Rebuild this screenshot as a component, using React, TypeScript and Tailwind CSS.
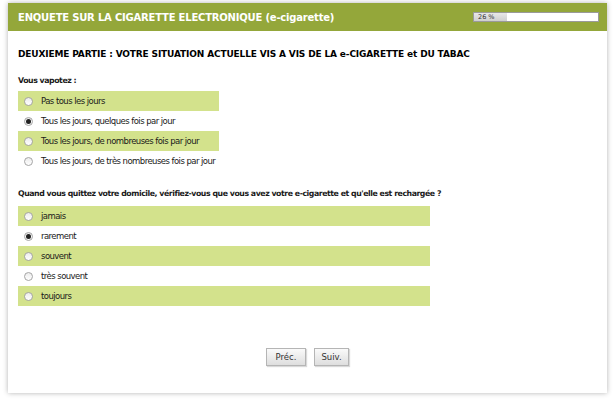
import React from "react";

const font = { fontFamily: '"DejaVu Sans", Verdana, sans-serif' };

function Radio({ checked }: { checked?: boolean }) {
  return (
    <span className="flex h-[9px] w-[9px] shrink-0 items-center justify-center rounded-full border border-[#a5a5a5] bg-gradient-to-b from-[#ececec] to-white">
      {checked && <span className="h-[5px] w-[5px] rounded-full bg-[#222]" />}
    </span>
  );
}

function Row({ label, green, checked, width }: { label: string; green: boolean; checked?: boolean; width: string }) {
  return (
    <div className={`flex h-[20px] items-center pl-[6px] ${width} ${green ? "bg-[#d3e28c]" : "bg-white"}`}>
      <Radio checked={checked} />
      <span className="ml-[8px] whitespace-nowrap text-[8.5px] tracking-[-0.55px] text-[#1a1a1a]">{label}</span>
    </div>
  );
}

export default function App() {
  const q1 = [
    "Pas tous les jours",
    "Tous les jours, quelques fois par jour",
    "Tous les jours, de nombreuses fois par jour",
    "Tous les jours, de très nombreuses fois par jour",
  ];
  const q2 = ["jamais", "rarement", "souvent", "très souvent", "toujours"];
  return (
    <div className="h-[400px] w-[614px] bg-white pl-[8px] pt-[3px]" style={font}>
      <div className="flex h-[390px] w-[599px] flex-col bg-white shadow-[0_0_5px_rgba(0,0,0,0.3)]">
        <div className="flex h-[28px] items-center justify-between bg-[#94a73a] pl-[10px] pr-[8px]">
          <span className="whitespace-nowrap text-[10px] font-bold tracking-[-0.2px] text-white">ENQUETE SUR LA CIGARETTE ELECTRONIQUE (e-cigarette)</span>
          <div className="relative h-[10px] w-[126px] border border-[#9a9a9a] bg-white">
            <div className="h-full w-[33px] bg-gradient-to-b from-[#e8e8e8] to-[#cfcfcf]" />
            <span className="absolute left-[4px] top-0 text-[6.5px] leading-[8px] text-[#333]">26 %</span>
          </div>
        </div>
        <div className="flex flex-col pl-[10px]">
          <div className="mt-[16px] h-[14px] whitespace-nowrap text-[9px] font-bold leading-[14px] tracking-[-0.15px] text-black">
            DEUXIEME PARTIE : VOTRE SITUATION ACTUELLE VIS A VIS DE LA e-CIGARETTE et DU TABAC
          </div>
          <div className="mt-[14px] h-[12px] whitespace-nowrap text-[7.8px] font-bold leading-[12px] tracking-[-0.45px] text-[#1a1a1a]">Vous vapotez :</div>
          <div className="mt-[4px] flex flex-col">
            {q1.map((l, i) => (
              <Row key={l} label={l} green={i % 2 === 0} checked={i === 1} width="w-[201px]" />
            ))}
          </div>
          <div className="mt-[17px] h-[12px] whitespace-nowrap text-[7.8px] font-bold leading-[12px] tracking-[-0.45px] text-[#1a1a1a]">
            Quand vous quittez votre domicile, vérifiez-vous que vous avez votre e-cigarette et qu'elle est rechargée ?
          </div>
          <div className="mt-[6px] flex flex-col">
            {q2.map((l, i) => (
              <Row key={l} label={l} green={i % 2 === 0} checked={i === 1} width="w-[412px]" />
            ))}
          </div>
        </div>
        <div className="mt-[42px] flex justify-center gap-[8px]">
          <button className="h-[18px] w-[40px] border border-[#b5b5b5] bg-gradient-to-b from-[#fafafa] to-[#dedede] text-[8.5px] text-[#333] shadow-[1px_1px_1px_rgba(0,0,0,0.15)]">Préc.</button>
          <button className="h-[18px] w-[35px] border border-[#b5b5b5] bg-gradient-to-b from-[#fafafa] to-[#dedede] text-[8.5px] text-[#333] shadow-[1px_1px_1px_rgba(0,0,0,0.15)]">Suiv.</button>
        </div>
      </div>
    </div>
  );
}
